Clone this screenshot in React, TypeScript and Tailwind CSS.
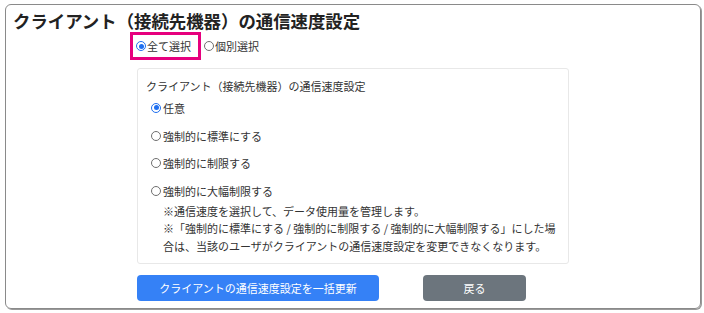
import React from "react";

function Radio({ checked }: { checked?: boolean }) {
  return checked ? (
    <span className="w-[10px] h-[10px] rounded-full border-[1.5px] border-[#1f6ff0] bg-white flex items-center justify-center shrink-0">
      <span className="w-[5px] h-[5px] rounded-full bg-[#1f6ff0]" />
    </span>
  ) : (
    <span className="w-[10px] h-[10px] rounded-full border border-[#6f6f6f] bg-white shrink-0" />
  );
}

export default function App() {
  const options = [
    { label: "任意", checked: true },
    { label: "強制的に標準にする" },
    { label: "強制的に制限する" },
    { label: "強制的に大幅制限する" },
  ];
  return (
    <div className="w-[704px] h-[313px] bg-white pt-[4px] pl-[5px] font-['Noto_Sans_CJK_JP','Noto_Sans',sans-serif] text-[#333]">
      <div className="w-[696px] h-[305px] border border-[#8a8a8a] rounded-[6px] shadow-[1px_1px_0_#9a9a9a] px-[7px]">
        <div className="pt-[5px] text-[17.4px] leading-[22px] font-bold text-[#222]">
          クライアント（接続先機器）の通信速度設定
        </div>
        <div className="flex items-center ml-[117px] text-[11px] leading-[16px]">
          <div className="h-[28px] border-[3px] border-[#e6007e] pl-[3px] pr-[7px] flex items-center gap-[1px]">
            <Radio checked />
            <span>全て選択</span>
          </div>
          <div className="flex items-center gap-[1px] ml-[3px]">
            <Radio />
            <span>個別選択</span>
          </div>
        </div>
        <div className="ml-[124px] mt-[8px] w-[432px] h-[196px] border border-[#e8e8e8] rounded-[3px] text-[11px]">
          <div className="pt-[9px] pl-[8px] leading-[16px]">
            クライアント（接続先機器）の通信速度設定
          </div>
          <div className="pl-[13px]">
            {options.map((o) => (
              <div key={o.label} className="h-[27.7px] flex items-center gap-[2px]">
                <Radio checked={o.checked} />
                <span className="leading-[16px]">{o.label}</span>
              </div>
            ))}
          </div>
          <div className="pl-[25px] mt-[-2px] leading-[17.5px]">
            <div>※通信速度を選択して、データ使用量を管理します。</div>
            <div>※「強制的に標準にする / 強制的に制限する / 強制的に大幅制限する」にした場</div>
            <div>合は、当該のユーザがクライアントの通信速度設定を変更できなくなります。</div>
          </div>
        </div>
        <div className="flex ml-[124px] mt-[11px] gap-[44px] text-[11px] text-white">
          <button className="w-[242px] h-[26px] rounded-[4px] bg-[#3581f6] flex items-center justify-center">
            クライアントの通信速度設定を一括更新
          </button>
          <button className="w-[103px] h-[26px] rounded-[4px] bg-[#6c757d] flex items-center justify-center">
            戻る
          </button>
        </div>
      </div>
    </div>
  );
}
